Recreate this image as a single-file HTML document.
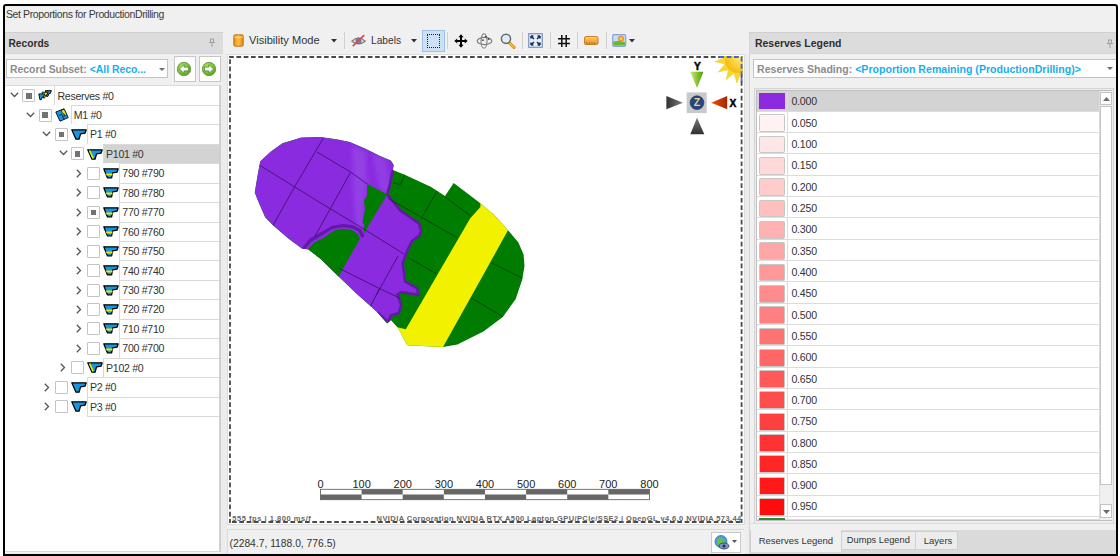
<!DOCTYPE html><html><head><meta charset="utf-8"><style>
*{margin:0;padding:0;box-sizing:border-box}
html,body{width:1120px;height:556px;overflow:hidden;background:#fff;font-family:"Liberation Sans", sans-serif;}
.a{position:absolute}
.t{position:absolute;white-space:nowrap;line-height:1;color:#333}
</style></head><body><div class="a" style="left:3px;top:4px;width:1115px;height:552px;border:2px solid #000;border-radius:3px 3px 0 0;background:#f0f0f0"></div>
<div class="t" style="left:6px;top:9px;font-size:10.5px;letter-spacing:-0.39px;color:#3a3a3a">Set Proportions for ProductionDrilling</div>
<div class="a" style="left:5px;top:31.5px;width:218px;height:22.3px;background:#dcdcdc;border-top:1px solid #d0d0d0;border-bottom:1px solid #d6d6d6"></div>
<div class="t" style="left:8.5px;top:38.5px;font-size:10.2px;font-weight:bold;color:#2e2e2e">Records</div>
<svg class="a" style="left:208px;top:38px" width="8" height="10" viewBox="0 0 8 10"><path d="M2 1h4M2.5 1v3.5M5.5 1v3.5M1 4.5h6M4 4.5v4.5" stroke="#9a9a9a" stroke-width="0.9" fill="none"/></svg>
<div class="a" style="left:6px;top:59px;width:162px;height:19px;background:#fff;border:1px solid #c4c4c4"></div>
<div class="t" style="left:10px;top:64.8px;font-size:10.4px;font-weight:bold;color:#8c8c8c">Record Subset: <span style="color:#17aef0">&lt;All Reco...</span></div>
<svg class="a" style="left:158.5px;top:67.6px" width="6" height="4"><path d="M0 0h6l-3 3z" fill="#6b6b6b"/></svg>
<div class="a" style="left:173.5px;top:56px;width:22px;height:25.5px;background:#fff;border:1px solid #c6c6c6"></div><svg class="a" style="left:177.0px;top:61.5px" width="14" height="14" viewBox="0 0 14 14"><defs><radialGradient id="gg" cx="0.4" cy="0.35" r="0.7"><stop offset="0" stop-color="#b6e86a"/><stop offset="1" stop-color="#5aa21a"/></radialGradient></defs><circle cx="7" cy="7" r="6.7" fill="url(#gg)" stroke="#4e8a20" stroke-width="0.7"/><path d="M2.3 7 L7.2 2.6 V5.1 H11.6 V8.9 H7.2 V11.4 Z" fill="#f2f6fc" stroke="#3f7a16" stroke-width="0.7" stroke-linejoin="round"/></svg>
<div class="a" style="left:198.5px;top:56px;width:22px;height:25.5px;background:#fff;border:1px solid #c6c6c6"></div><svg class="a" style="left:202.0px;top:61.5px" width="14" height="14" viewBox="0 0 14 14"><defs><radialGradient id="gg" cx="0.4" cy="0.35" r="0.7"><stop offset="0" stop-color="#b6e86a"/><stop offset="1" stop-color="#5aa21a"/></radialGradient></defs><circle cx="7" cy="7" r="6.7" fill="url(#gg)" stroke="#4e8a20" stroke-width="0.7"/><path d="M11.7 7 L6.8 2.6 V5.1 H2.4 V8.9 H6.8 V11.4 Z" fill="#f2f6fc" stroke="#3f7a16" stroke-width="0.7" stroke-linejoin="round"/></svg>
<div class="a" style="left:5px;top:85px;width:216px;height:467px;background:#fff;border-right:2px solid #cfcfcf;border-bottom:1px solid #d8d8d8;border-top:1px solid #dcdcdc"></div>
<div class="a" style="left:221px;top:54px;width:6px;height:500px;background:#ececec"></div>
<div class="a" style="left:54.4px;top:85px;width:164.6px;height:20px;background:#fff;border-top:1px solid #dadada;border-left:1px solid #dadada;"></div>
<svg class="a" style="left:10.0px;top:92.1px" width="9" height="6" viewBox="0 0 9 6"><path d="M0.8 0.8L4.5 4.5L8.2 0.8" stroke="#555" stroke-width="1.3" fill="none"/></svg>
<div class="a" style="left:22.3px;top:89.10px;width:13px;height:13px;border:1px solid #c4c4c4;border-radius:1px;background:#fff"></div>
<div class="a" style="left:26.1px;top:93.00px;width:5.5px;height:5.5px;background:#727272"></div>
<svg class="a" style="left:38.3px;top:90.3px" width="15" height="11" viewBox="0 0 15 11"><path d="M7.4 0.6 L13.4 0.6 L12.3 3.4 L10.9 3.7 L9.9 6.4 L8.5 6.4Z" fill="#1497df" stroke="#000" stroke-width="0.9" stroke-linejoin="round"/><path d="M4.1 2.2 L10.1 2.2 L9.0 5.0 L7.6 5.3 L6.6 8.0 L5.2 8.0Z" fill="#f2e600" stroke="#000" stroke-width="0.9" stroke-linejoin="round"/><path d="M0.8 3.9 L6.8 3.9 L5.7 6.7 L4.3 7.0 L3.3 9.7 L1.9 9.7Z" fill="#1497df" stroke="#000" stroke-width="0.9" stroke-linejoin="round"/></svg>
<div class="t" style="left:57.5px;top:90.60px;font-size:10.6px;letter-spacing:-0.3px;color:#333">Reserves #0</div>
<div class="a" style="left:70.6px;top:105px;width:148.4px;height:19px;background:#fff;border-top:1px solid #dadada;border-left:1px solid #dadada;"></div>
<svg class="a" style="left:26.2px;top:111.5px" width="9" height="6" viewBox="0 0 9 6"><path d="M0.8 0.8L4.5 4.5L8.2 0.8" stroke="#555" stroke-width="1.3" fill="none"/></svg>
<div class="a" style="left:38.5px;top:108.54px;width:13px;height:13px;border:1px solid #c4c4c4;border-radius:1px;background:#fff"></div>
<div class="a" style="left:42.3px;top:112.44px;width:5.5px;height:5.5px;background:#727272"></div>
<svg class="a" style="left:54.5px;top:107.84px" width="14" height="14" viewBox="0 0 14 14"><path d="M0.8 4L9 0.8L13.2 9.6L5 13.2Z" fill="#1497df" stroke="#0a1a2a" stroke-width="1" stroke-linejoin="round"/><path d="M4 7.5L6.5 6.2L9 11.2" fill="none" stroke="#0a1a2a" stroke-width="0.9"/><path d="M6 2.6L9.2 1.2L12 7L8.8 8.4L9.6 6.2L7.6 5.4Z" fill="#f2e600" stroke="#0a1a2a" stroke-width="0.8" stroke-linejoin="round"/></svg>
<div class="t" style="left:73.7px;top:110.04px;font-size:10.6px;letter-spacing:-0.3px;color:#333">M1 #0</div>
<div class="a" style="left:86.8px;top:124px;width:132.2px;height:20px;background:#fff;border-top:1px solid #dadada;border-left:1px solid #dadada;"></div>
<svg class="a" style="left:42.4px;top:131.0px" width="9" height="6" viewBox="0 0 9 6"><path d="M0.8 0.8L4.5 4.5L8.2 0.8" stroke="#555" stroke-width="1.3" fill="none"/></svg>
<div class="a" style="left:54.7px;top:127.98px;width:13px;height:13px;border:1px solid #c4c4c4;border-radius:1px;background:#fff"></div>
<div class="a" style="left:58.5px;top:131.88px;width:5.5px;height:5.5px;background:#727272"></div>
<svg class="a" style="left:70.9px;top:129.07999999999998px" width="16" height="11" viewBox="0 0 16 11"><path d="M0.8 0.8H15.2L14 4.2L9.6 4.8L8 10.2H5Z" fill="#1497df" stroke="#000" stroke-width="1.3" stroke-linejoin="round"/></svg>
<div class="t" style="left:89.9px;top:129.48px;font-size:10.6px;letter-spacing:-0.3px;color:#333">P1 #0</div>
<div class="a" style="left:103.0px;top:144px;width:116.0px;height:19px;background:#d3d3d3;border-top:1px solid #dadada;border-left:1px solid #dadada;"></div>
<svg class="a" style="left:58.6px;top:150.4px" width="9" height="6" viewBox="0 0 9 6"><path d="M0.8 0.8L4.5 4.5L8.2 0.8" stroke="#555" stroke-width="1.3" fill="none"/></svg>
<div class="a" style="left:70.9px;top:147.42px;width:13px;height:13px;border:1px solid #c4c4c4;border-radius:1px;background:#fff"></div>
<div class="a" style="left:74.7px;top:151.32px;width:5.5px;height:5.5px;background:#727272"></div>
<svg class="a" style="left:87.1px;top:148.51999999999998px" width="16" height="11" viewBox="0 0 16 11"><path d="M0.8 0.8H15.2L14 4.2L9.6 4.8L8 10.2H5Z" fill="#1497df" stroke="#000" stroke-width="1.3" stroke-linejoin="round"/><path d="M2.5 1.5L6.2 9.4" stroke="#f2e600" stroke-width="1.6"/></svg>
<div class="t" style="left:106.1px;top:148.92px;font-size:10.6px;letter-spacing:-0.3px;color:#333">P101 #0</div>
<div class="a" style="left:119.2px;top:163px;width:99.8px;height:20px;background:#fff;border-top:1px solid #dadada;border-left:1px solid #dadada;"></div>
<svg class="a" style="left:76.3px;top:168.9px" width="6" height="9" viewBox="0 0 6 9"><path d="M0.8 0.8L4.5 4.5L0.8 8.2" stroke="#555" stroke-width="1.3" fill="none"/></svg>
<div class="a" style="left:87.1px;top:166.86px;width:13px;height:13px;border:1px solid #c4c4c4;border-radius:1px;background:#fff"></div>
<svg class="a" style="left:103.3px;top:167.95999999999998px" width="16" height="11" viewBox="0 0 16 11"><path d="M0.8 0.8H15.2L14 4.2L9.6 4.8L8.6 9.8H4.4Z" fill="#1497df" stroke="#000" stroke-width="1.3" stroke-linejoin="round"/><path d="M2.6 5.6H9.6L9.2 7.6H3.6Z" fill="#f2e600"/></svg>
<div class="t" style="left:122.3px;top:168.36px;font-size:10.6px;letter-spacing:-0.3px;color:#333">790 #790</div>
<div class="a" style="left:119.2px;top:183px;width:99.8px;height:19px;background:#fff;border-top:1px solid #dadada;border-left:1px solid #dadada;"></div>
<svg class="a" style="left:76.3px;top:188.3px" width="6" height="9" viewBox="0 0 6 9"><path d="M0.8 0.8L4.5 4.5L0.8 8.2" stroke="#555" stroke-width="1.3" fill="none"/></svg>
<div class="a" style="left:87.1px;top:186.30px;width:13px;height:13px;border:1px solid #c4c4c4;border-radius:1px;background:#fff"></div>
<svg class="a" style="left:103.3px;top:187.39999999999998px" width="16" height="11" viewBox="0 0 16 11"><path d="M0.8 0.8H15.2L14 4.2L9.6 4.8L8.6 9.8H4.4Z" fill="#1497df" stroke="#000" stroke-width="1.3" stroke-linejoin="round"/><path d="M2.6 5.6H9.6L9.2 7.6H3.6Z" fill="#f2e600"/></svg>
<div class="t" style="left:122.3px;top:187.80px;font-size:10.6px;letter-spacing:-0.3px;color:#333">780 #780</div>
<div class="a" style="left:119.2px;top:202px;width:99.8px;height:20px;background:#fff;border-top:1px solid #dadada;border-left:1px solid #dadada;"></div>
<svg class="a" style="left:76.3px;top:207.7px" width="6" height="9" viewBox="0 0 6 9"><path d="M0.8 0.8L4.5 4.5L0.8 8.2" stroke="#555" stroke-width="1.3" fill="none"/></svg>
<div class="a" style="left:87.1px;top:205.74px;width:13px;height:13px;border:1px solid #c4c4c4;border-radius:1px;background:#fff"></div>
<div class="a" style="left:90.9px;top:209.64px;width:5.5px;height:5.5px;background:#727272"></div>
<svg class="a" style="left:103.3px;top:206.84px" width="16" height="11" viewBox="0 0 16 11"><path d="M0.8 0.8H15.2L14 4.2L9.6 4.8L8.6 9.8H4.4Z" fill="#1497df" stroke="#000" stroke-width="1.3" stroke-linejoin="round"/><path d="M2.6 5.6H9.6L9.2 7.6H3.6Z" fill="#f2e600"/></svg>
<div class="t" style="left:122.3px;top:207.24px;font-size:10.6px;letter-spacing:-0.3px;color:#333">770 #770</div>
<div class="a" style="left:119.2px;top:222px;width:99.8px;height:19px;background:#fff;border-top:1px solid #dadada;border-left:1px solid #dadada;"></div>
<svg class="a" style="left:76.3px;top:227.2px" width="6" height="9" viewBox="0 0 6 9"><path d="M0.8 0.8L4.5 4.5L0.8 8.2" stroke="#555" stroke-width="1.3" fill="none"/></svg>
<div class="a" style="left:87.1px;top:225.18px;width:13px;height:13px;border:1px solid #c4c4c4;border-radius:1px;background:#fff"></div>
<svg class="a" style="left:103.3px;top:226.28px" width="16" height="11" viewBox="0 0 16 11"><path d="M0.8 0.8H15.2L14 4.2L9.6 4.8L8.6 9.8H4.4Z" fill="#1497df" stroke="#000" stroke-width="1.3" stroke-linejoin="round"/><path d="M2.6 5.6H9.6L9.2 7.6H3.6Z" fill="#f2e600"/></svg>
<div class="t" style="left:122.3px;top:226.68px;font-size:10.6px;letter-spacing:-0.3px;color:#333">760 #760</div>
<div class="a" style="left:119.2px;top:241px;width:99.8px;height:19px;background:#fff;border-top:1px solid #dadada;border-left:1px solid #dadada;"></div>
<svg class="a" style="left:76.3px;top:246.6px" width="6" height="9" viewBox="0 0 6 9"><path d="M0.8 0.8L4.5 4.5L0.8 8.2" stroke="#555" stroke-width="1.3" fill="none"/></svg>
<div class="a" style="left:87.1px;top:244.62px;width:13px;height:13px;border:1px solid #c4c4c4;border-radius:1px;background:#fff"></div>
<svg class="a" style="left:103.3px;top:245.72px" width="16" height="11" viewBox="0 0 16 11"><path d="M0.8 0.8H15.2L14 4.2L9.6 4.8L8.6 9.8H4.4Z" fill="#1497df" stroke="#000" stroke-width="1.3" stroke-linejoin="round"/><path d="M2.6 5.6H9.6L9.2 7.6H3.6Z" fill="#f2e600"/></svg>
<div class="t" style="left:122.3px;top:246.12px;font-size:10.6px;letter-spacing:-0.3px;color:#333">750 #750</div>
<div class="a" style="left:119.2px;top:260px;width:99.8px;height:20px;background:#fff;border-top:1px solid #dadada;border-left:1px solid #dadada;"></div>
<svg class="a" style="left:76.3px;top:266.1px" width="6" height="9" viewBox="0 0 6 9"><path d="M0.8 0.8L4.5 4.5L0.8 8.2" stroke="#555" stroke-width="1.3" fill="none"/></svg>
<div class="a" style="left:87.1px;top:264.06px;width:13px;height:13px;border:1px solid #c4c4c4;border-radius:1px;background:#fff"></div>
<svg class="a" style="left:103.3px;top:265.16px" width="16" height="11" viewBox="0 0 16 11"><path d="M0.8 0.8H15.2L14 4.2L9.6 4.8L8.6 9.8H4.4Z" fill="#1497df" stroke="#000" stroke-width="1.3" stroke-linejoin="round"/><path d="M2.6 5.6H9.6L9.2 7.6H3.6Z" fill="#f2e600"/></svg>
<div class="t" style="left:122.3px;top:265.56px;font-size:10.6px;letter-spacing:-0.3px;color:#333">740 #740</div>
<div class="a" style="left:119.2px;top:280px;width:99.8px;height:19px;background:#fff;border-top:1px solid #dadada;border-left:1px solid #dadada;"></div>
<svg class="a" style="left:76.3px;top:285.5px" width="6" height="9" viewBox="0 0 6 9"><path d="M0.8 0.8L4.5 4.5L0.8 8.2" stroke="#555" stroke-width="1.3" fill="none"/></svg>
<div class="a" style="left:87.1px;top:283.50px;width:13px;height:13px;border:1px solid #c4c4c4;border-radius:1px;background:#fff"></div>
<svg class="a" style="left:103.3px;top:284.59999999999997px" width="16" height="11" viewBox="0 0 16 11"><path d="M0.8 0.8H15.2L14 4.2L9.6 4.8L8.6 9.8H4.4Z" fill="#1497df" stroke="#000" stroke-width="1.3" stroke-linejoin="round"/><path d="M2.6 5.6H9.6L9.2 7.6H3.6Z" fill="#f2e600"/></svg>
<div class="t" style="left:122.3px;top:285.00px;font-size:10.6px;letter-spacing:-0.3px;color:#333">730 #730</div>
<div class="a" style="left:119.2px;top:299px;width:99.8px;height:20px;background:#fff;border-top:1px solid #dadada;border-left:1px solid #dadada;"></div>
<svg class="a" style="left:76.3px;top:304.9px" width="6" height="9" viewBox="0 0 6 9"><path d="M0.8 0.8L4.5 4.5L0.8 8.2" stroke="#555" stroke-width="1.3" fill="none"/></svg>
<div class="a" style="left:87.1px;top:302.94px;width:13px;height:13px;border:1px solid #c4c4c4;border-radius:1px;background:#fff"></div>
<svg class="a" style="left:103.3px;top:304.04px" width="16" height="11" viewBox="0 0 16 11"><path d="M0.8 0.8H15.2L14 4.2L9.6 4.8L8.6 9.8H4.4Z" fill="#1497df" stroke="#000" stroke-width="1.3" stroke-linejoin="round"/><path d="M2.6 5.6H9.6L9.2 7.6H3.6Z" fill="#f2e600"/></svg>
<div class="t" style="left:122.3px;top:304.44px;font-size:10.6px;letter-spacing:-0.3px;color:#333">720 #720</div>
<div class="a" style="left:119.2px;top:319px;width:99.8px;height:19px;background:#fff;border-top:1px solid #dadada;border-left:1px solid #dadada;"></div>
<svg class="a" style="left:76.3px;top:324.4px" width="6" height="9" viewBox="0 0 6 9"><path d="M0.8 0.8L4.5 4.5L0.8 8.2" stroke="#555" stroke-width="1.3" fill="none"/></svg>
<div class="a" style="left:87.1px;top:322.38px;width:13px;height:13px;border:1px solid #c4c4c4;border-radius:1px;background:#fff"></div>
<svg class="a" style="left:103.3px;top:323.48px" width="16" height="11" viewBox="0 0 16 11"><path d="M0.8 0.8H15.2L14 4.2L9.6 4.8L8.6 9.8H4.4Z" fill="#1497df" stroke="#000" stroke-width="1.3" stroke-linejoin="round"/><path d="M2.6 5.6H9.6L9.2 7.6H3.6Z" fill="#f2e600"/></svg>
<div class="t" style="left:122.3px;top:323.88px;font-size:10.6px;letter-spacing:-0.3px;color:#333">710 #710</div>
<div class="a" style="left:119.2px;top:338px;width:99.8px;height:20px;background:#fff;border-top:1px solid #dadada;border-left:1px solid #dadada;"></div>
<svg class="a" style="left:76.3px;top:343.8px" width="6" height="9" viewBox="0 0 6 9"><path d="M0.8 0.8L4.5 4.5L0.8 8.2" stroke="#555" stroke-width="1.3" fill="none"/></svg>
<div class="a" style="left:87.1px;top:341.82px;width:13px;height:13px;border:1px solid #c4c4c4;border-radius:1px;background:#fff"></div>
<svg class="a" style="left:103.3px;top:342.92px" width="16" height="11" viewBox="0 0 16 11"><path d="M0.8 0.8H15.2L14 4.2L9.6 4.8L8.6 9.8H4.4Z" fill="#1497df" stroke="#000" stroke-width="1.3" stroke-linejoin="round"/><path d="M2.6 5.6H9.6L9.2 7.6H3.6Z" fill="#f2e600"/></svg>
<div class="t" style="left:122.3px;top:343.32px;font-size:10.6px;letter-spacing:-0.3px;color:#333">700 #700</div>
<div class="a" style="left:103.0px;top:358px;width:116.0px;height:19px;background:#fff;border-top:1px solid #dadada;border-left:1px solid #dadada;"></div>
<svg class="a" style="left:60.1px;top:363.3px" width="6" height="9" viewBox="0 0 6 9"><path d="M0.8 0.8L4.5 4.5L0.8 8.2" stroke="#555" stroke-width="1.3" fill="none"/></svg>
<div class="a" style="left:70.9px;top:361.26px;width:13px;height:13px;border:1px solid #c4c4c4;border-radius:1px;background:#fff"></div>
<svg class="a" style="left:87.1px;top:362.36px" width="16" height="11" viewBox="0 0 16 11"><path d="M0.8 0.8H15.2L14 4.2L9.6 4.8L8 10.2H5Z" fill="#1497df" stroke="#000" stroke-width="1.3" stroke-linejoin="round"/><path d="M2.5 1.5L6.2 9.4" stroke="#f2e600" stroke-width="1.6"/></svg>
<div class="t" style="left:106.1px;top:362.76px;font-size:10.6px;letter-spacing:-0.3px;color:#333">P102 #0</div>
<div class="a" style="left:86.8px;top:377px;width:132.2px;height:20px;background:#fff;border-top:1px solid #dadada;border-left:1px solid #dadada;"></div>
<svg class="a" style="left:43.9px;top:382.7px" width="6" height="9" viewBox="0 0 6 9"><path d="M0.8 0.8L4.5 4.5L0.8 8.2" stroke="#555" stroke-width="1.3" fill="none"/></svg>
<div class="a" style="left:54.7px;top:380.70px;width:13px;height:13px;border:1px solid #c4c4c4;border-radius:1px;background:#fff"></div>
<svg class="a" style="left:70.9px;top:381.8px" width="16" height="11" viewBox="0 0 16 11"><path d="M0.8 0.8H15.2L14 4.2L9.6 4.8L8 10.2H5Z" fill="#1497df" stroke="#000" stroke-width="1.3" stroke-linejoin="round"/></svg>
<div class="t" style="left:89.9px;top:382.20px;font-size:10.6px;letter-spacing:-0.3px;color:#333">P2 #0</div>
<div class="a" style="left:86.8px;top:397px;width:132.2px;height:20px;background:#fff;border-top:1px solid #dadada;border-left:1px solid #dadada;border-bottom:1px solid #dadada;"></div>
<svg class="a" style="left:43.9px;top:402.1px" width="6" height="9" viewBox="0 0 6 9"><path d="M0.8 0.8L4.5 4.5L0.8 8.2" stroke="#555" stroke-width="1.3" fill="none"/></svg>
<div class="a" style="left:54.7px;top:400.14px;width:13px;height:13px;border:1px solid #c4c4c4;border-radius:1px;background:#fff"></div>
<svg class="a" style="left:70.9px;top:401.24px" width="16" height="11" viewBox="0 0 16 11"><path d="M0.8 0.8H15.2L14 4.2L9.6 4.8L8 10.2H5Z" fill="#1497df" stroke="#000" stroke-width="1.3" stroke-linejoin="round"/></svg>
<div class="t" style="left:89.9px;top:401.64px;font-size:10.6px;letter-spacing:-0.3px;color:#333">P3 #0</div>
<svg class="a" style="left:233px;top:34px" width="11" height="13" viewBox="0 0 11 13"><defs><linearGradient id="og" x1="0" x2="1"><stop offset="0" stop-color="#e8901a"/><stop offset="0.5" stop-color="#ffc044"/><stop offset="1" stop-color="#e08a10"/></linearGradient></defs><rect x="0.8" y="0.8" width="9.4" height="11.4" rx="1.3" fill="url(#og)" stroke="#c06a10" stroke-width="0.9"/><path d="M1.2 3.2H9.8" stroke="#ffe2a0" stroke-width="0.8"/></svg>
<div class="t" style="left:249px;top:35px;font-size:11.1px;color:#333">Visibility Mode</div>
<svg class="a" style="left:331px;top:39px" width="6" height="4"><path d="M0 0h6l-3 3.5z" fill="#333"/></svg>
<div class="a" style="left:343.5px;top:32px;width:1px;height:17px;background:#d0d0d0"></div>
<svg class="a" style="left:351px;top:34px" width="15" height="13" viewBox="0 0 15 13"><path d="M0.8 7.2Q7.5 0.6 14.2 7.2Q7.5 12.6 0.8 7.2Z" fill="#d6dcea" stroke="#8c7a6a" stroke-width="1.2"/><circle cx="7.5" cy="7" r="2.6" fill="#7888b8" stroke="#4a5a8a" stroke-width="0.6"/><path d="M1.8 12.2L13.2 1.2" stroke="#e0463a" stroke-width="1.6"/></svg>
<div class="t" style="left:371px;top:36.3px;font-size:10.2px;color:#333">Labels</div>
<svg class="a" style="left:411px;top:39px" width="6" height="4"><path d="M0 0h6l-3 3.5z" fill="#333"/></svg>
<div class="a" style="left:421.5px;top:30px;width:23px;height:21.5px;background:#cde0f7;border:1px solid #9cc0e6"></div>
<div class="a" style="left:427px;top:34px;width:13px;height:13.5px;border:1.3px dotted #222"></div>
<div class="a" style="left:447px;top:32px;width:1px;height:17px;background:#d0d0d0"></div>
<svg class="a" style="left:454px;top:33.5px" width="14" height="14" viewBox="0 0 14 14"><path d="M7 0.3L9.6 3.2H8V6H10.8V4.4L13.7 7L10.8 9.6V8H8V10.8H9.6L7 13.7L4.4 10.8H6V8H3.2V9.6L0.3 7L3.2 4.4V6H6V3.2H4.4Z" fill="#000"/></svg>
<svg class="a" style="left:476px;top:33px" width="17" height="16" viewBox="0 0 17 16"><ellipse cx="8.5" cy="8" rx="7.3" ry="3.6" fill="none" stroke="#7b7b7b" stroke-width="1.1"/><ellipse cx="8" cy="8" rx="3" ry="7.2" fill="none" stroke="#7b7b7b" stroke-width="1.1"/><circle cx="9.8" cy="3.6" r="0.9" fill="#444"/><circle cx="12.6" cy="6" r="0.9" fill="#444"/><circle cx="7" cy="7.2" r="0.9" fill="#444"/></svg>
<svg class="a" style="left:500px;top:33px" width="16" height="16" viewBox="0 0 16 16"><path d="M9 9.5L14 14.4" stroke="#d08a10" stroke-width="3" stroke-linecap="round"/><path d="M9.5 10L13.8 14.2" stroke="#ffc23a" stroke-width="1.4" stroke-linecap="round"/><circle cx="6" cy="5.8" r="4.6" fill="#dcecfa" stroke="#6a6a6a" stroke-width="1.5"/></svg>
<div class="a" style="left:521.5px;top:32px;width:1px;height:17px;background:#d0d0d0"></div>
<svg class="a" style="left:528px;top:33px" width="15" height="15" viewBox="0 0 15 15"><rect x="0.7" y="0.7" width="13.6" height="13.6" fill="#e4eefa" stroke="#7d93bf" stroke-width="1.2"/><path d="M3 3L6 6M3 3H5.4M3 3V5.4M12 3L9 6M12 3H9.6M12 3V5.4M3 12L6 9M3 12H5.4M3 12V9.6M12 12L9 9M12 12H9.6M12 12V9.6" stroke="#1b2f55" stroke-width="1.5"/></svg>
<div class="a" style="left:549.5px;top:32px;width:1px;height:17px;background:#d0d0d0"></div>
<svg class="a" style="left:558px;top:34.5px" width="12" height="12.5" viewBox="0 0 12 12.5"><path d="M3.8 0V12.5M8.2 0V12.5M0 3.8H12M0 8.5H12" stroke="#111" stroke-width="1.5"/></svg>
<div class="a" style="left:577px;top:32px;width:1px;height:17px;background:#d0d0d0"></div>
<svg class="a" style="left:584px;top:36px" width="14.5" height="9" viewBox="0 0 14.5 9"><defs><linearGradient id="rg" x1="0" y1="0" x2="0" y2="1"><stop offset="0" stop-color="#ffcf6a"/><stop offset="1" stop-color="#e8901c"/></linearGradient></defs><rect x="0.5" y="0.5" width="13.5" height="8" rx="1.5" fill="url(#rg)" stroke="#c87418" stroke-width="0.9"/><path d="M3 8V6M5.5 8V6.5M8 8V6M10.5 8V6.5" stroke="#b06010" stroke-width="0.8"/></svg>
<div class="a" style="left:605.5px;top:32px;width:1px;height:17px;background:#d0d0d0"></div>
<svg class="a" style="left:612px;top:34px" width="14.5" height="13" viewBox="0 0 14.5 13"><rect x="0.7" y="0.7" width="13" height="11.6" rx="1.2" fill="#bfe0f8" stroke="#8aa0d0" stroke-width="1.2"/><path d="M1.4 7.5Q5 6 13 8.2V11.6H1.4Z" fill="#6ab830"/><circle cx="9" cy="4.8" r="2.8" fill="#f0a040" stroke="#e07a20" stroke-width="0.6"/><circle cx="9" cy="4.8" r="1.2" fill="#f8d070"/></svg>
<svg class="a" style="left:629px;top:39px" width="6" height="4"><path d="M0 0h6l-3 3.5z" fill="#333"/></svg>
<div class="a" style="left:227px;top:54px;width:517.5px;height:470.5px;background:#fff;border:1px solid #dcdcdc"></div>
<svg class="a" style="left:0;top:0" width="1120" height="556"><g fill="none" stroke="#4a4a4a" stroke-width="1.8" stroke-dasharray="4.7 2.6"><path d="M229.1 57H742"/><path d="M230 59.2V523"/><path d="M741.6 59.2V523"/><path d="M232 522H742"/></g></svg>
<svg class="a" style="left:0;top:0" width="1120" height="556" viewBox="0 0 1120 556"><defs><clipPath id="oc"><polygon points="301.3,137.4 320.2,137.1 336.4,139.2 349.9,141.9 364.5,148.2 379.6,155.8 390.9,160.5 393.8,165.2 392.8,169.9 404.2,174.6 430.7,186.7 445.0,195.9 453.7,183.0 478.7,202.0 494.3,214.9 509.8,232.2 518.4,242.5 523.6,254.6 524.5,266.0 522.2,279.7 515.7,299.1 502.8,317.0 483.4,331.5 457.4,344.5 442.9,346.9 407.2,345.3 398.3,328.3 391.0,320.2 387.0,323.4 377.3,312.2 357.9,295.0 338.5,276.6 321.2,259.4 308.3,249.6 301.8,248.6 288.9,238.9 273.7,225.9 265.1,217.3 257.6,200.0 254.7,192.5 257.4,176.3 260.1,161.4 270.2,152.0 282.4,143.2"/></clipPath><filter id="bl" x="-50%" y="-50%" width="200%" height="200%"><feGaussianBlur stdDeviation="2"/></filter></defs><polygon points="301.3,137.4 320.2,137.1 336.4,139.2 349.9,141.9 364.5,148.2 379.6,155.8 390.9,160.5 393.8,165.2 392.8,169.9 404.2,174.6 430.7,186.7 445.0,195.9 453.7,183.0 478.7,202.0 494.3,214.9 509.8,232.2 518.4,242.5 523.6,254.6 524.5,266.0 522.2,279.7 515.7,299.1 502.8,317.0 483.4,331.5 457.4,344.5 442.9,346.9 407.2,345.3 398.3,328.3 391.0,320.2 387.0,323.4 377.3,312.2 357.9,295.0 338.5,276.6 321.2,259.4 308.3,249.6 301.8,248.6 288.9,238.9 273.7,225.9 265.1,217.3 257.6,200.0 254.7,192.5 257.4,176.3 260.1,161.4 270.2,152.0 282.4,143.2" fill="#007c00"/><g clip-path="url(#oc)"><polygon points="301.3,137.4 320.2,137.1 336.4,139.2 349.9,141.9 364.5,148.2 379.6,155.8 390.9,160.5 393.8,165.2 392.8,169.9 390.0,184.1 387.2,194.4 396.6,205.8 400.4,210.5 419.2,223.7 421.1,231.2 419.6,235.4 412.1,240.8 407.8,249.4 402.6,263.3 405.2,281.6 417.0,288.1 418.3,294.7 401.3,292.0 397.4,294.7 401.3,305.1 398.7,313.0 390.9,315.5 388.3,322.1 377.3,312.2 357.9,295.0 338.5,276.6 321.2,259.4 308.3,249.6 301.8,248.6 288.9,238.9 273.7,225.9 265.1,217.3 257.6,200.0 254.7,192.5 257.4,176.3 260.1,161.4 270.2,152.0 282.4,143.2" fill="#8a2be0"/><polygon points="352,146 366,152 367,184 364,205 363,228 356,230 353,190" fill="#a468ee" opacity="0.35" filter="url(#bl)"/><polygon points="372,153 386,159 390,184 387,194 380,190 376,172" fill="#a468ee" opacity="0.3" filter="url(#bl)"/><polyline points="392.8,169.9 390.0,184.1 387.2,194.4 396.6,205.8 400.4,210.5 419.2,223.7 421.1,231.2 419.6,235.4 412.1,240.8 407.8,249.4 402.6,263.3 405.2,281.6 417.0,288.1 418.3,294.7 401.3,292.0 397.4,294.7 401.3,305.1 398.7,313.0 390.9,315.5 388.3,322.1 377.3,312.2" fill="none" stroke="#6418a8" stroke-width="2.6"/><polyline points="303.0,249.5 310.0,240.5 322.0,233.5 332.0,227.5 343.0,225.5 353.0,226.8 360.0,230.5 363.0,237.0" fill="none" stroke="#6418a8" stroke-width="3.2" stroke-linejoin="round"/><polygon points="307.6,249.6 313.9,242.7 324.0,237.6 329.0,233.9 335.3,230.1 342.9,228.8 351.7,230.1 358.0,233.9 359.9,238.9 338.5,276.7 321.2,259.4 308.3,249.6" fill="#007c00"/><polygon points="367.4,184.1 387.2,194.4 363.6,234.0 364.5,225.0 362.5,222.0 365.0,210.0 364.0,200.0 367.0,196.0" fill="#007c00"/><polygon points="476.0,190.0 480.4,203.0 480.4,207.1 470.1,218.4 405.8,329.3 396.0,327.0 390.0,360.0 440.0,360.0 443.0,347.0 486.0,270.0 508.1,230.0 525.0,215.0 490.0,185.0" fill="#f2f200"/><line x1="404.8" y1="174.8" x2="400.4" y2="184.5" stroke="#0a3a0a" stroke-width="0.8"/><line x1="400.4" y1="184.5" x2="393" y2="182.8" stroke="#0a3a0a" stroke-width="0.8"/><line x1="437" y1="191" x2="421" y2="219" stroke="#0a3a0a" stroke-width="0.8"/><line x1="445" y1="197" x2="470" y2="215.5" stroke="#0a3a0a" stroke-width="0.8"/><line x1="388.6" y1="198.6" x2="457" y2="237.6" stroke="#0a3a0a" stroke-width="0.8"/><line x1="490.9" y1="262.4" x2="524" y2="279" stroke="#0a3a0a" stroke-width="0.8"/><line x1="408.9" y1="258" x2="436" y2="273.5" stroke="#0a3a0a" stroke-width="0.8"/><line x1="471.4" y1="298" x2="505" y2="318" stroke="#0a3a0a" stroke-width="0.8"/><line x1="323.5" y1="137.8" x2="294.5" y2="187.1" stroke="#3a1060" stroke-width="0.8"/><line x1="294.5" y1="187.1" x2="272.7" y2="225.9" stroke="#3a1060" stroke-width="0.8"/><line x1="260.1" y1="165.5" x2="315.8" y2="200" stroke="#3a1060" stroke-width="0.8"/><line x1="315.8" y1="200" x2="362.2" y2="228" stroke="#3a1060" stroke-width="0.8"/><line x1="316.8" y1="152" x2="349.9" y2="171.6" stroke="#3a1060" stroke-width="0.8"/><line x1="349.9" y1="171.6" x2="367.4" y2="184.1" stroke="#3a1060" stroke-width="0.8"/><line x1="350.4" y1="172.5" x2="314.8" y2="236.7" stroke="#3a1060" stroke-width="0.8"/><line x1="338.5" y1="268" x2="379.5" y2="288.5" stroke="#3a1060" stroke-width="0.8"/><line x1="379.5" y1="288.5" x2="400" y2="298.2" stroke="#3a1060" stroke-width="0.8"/><line x1="379.5" y1="288.5" x2="369.8" y2="307.9" stroke="#3a1060" stroke-width="0.8"/><line x1="362.2" y1="228" x2="404" y2="254" stroke="#3a1060" stroke-width="0.8"/><line x1="398" y1="255.9" x2="376.5" y2="294.7" stroke="#3a1060" stroke-width="0.8"/></g></svg>
<svg class="a" style="left:0;top:0" width="1120" height="556" viewBox="0 0 1120 556"><defs><clipPath id="vc"><rect x="230" y="56" width="512.5" height="466"/></clipPath><radialGradient id="sung" cx="0.6" cy="0.4" r="0.6"><stop offset="0" stop-color="#ffec7a"/><stop offset="1" stop-color="#f4be10"/></radialGradient><linearGradient id="gy" x1="0" x2="1"><stop offset="0" stop-color="#c8f060"/><stop offset="1" stop-color="#4a9a10"/></linearGradient><linearGradient id="rx" x1="0" x2="1"><stop offset="0" stop-color="#ff4a00"/><stop offset="1" stop-color="#a02800"/></linearGradient><linearGradient id="gl" x1="0" x2="0" y1="0" y2="1"><stop offset="0" stop-color="#7a7a7a"/><stop offset="1" stop-color="#303030"/></linearGradient><linearGradient id="gb" x1="0" x2="1"><stop offset="0" stop-color="#303030"/><stop offset="1" stop-color="#808080"/></linearGradient></defs><g clip-path="url(#vc)"><path d="M715.1,61.6 L724.7,57.7 L716.9,50.8 L727.3,51.8 L723.6,42.0 L732.3,47.7 L733.6,37.4 L738.7,46.5 L744.6,38.0 L744.9,48.4 L754.1,43.6 L749.5,52.9 L759.9,53.0 L751.5,59.1 L760.7,63.9 L750.4,65.4 L756.2,74.0 L746.4,70.5 L747.6,80.9 L740.6,73.3 L736.8,83.0 L734.1,72.9 L726.3,79.8 L728.5,69.6 L718.4,72.1 L725.1,64.1Z" fill="#f9d82a" stroke="#f0c020" stroke-width="0.5"/><circle cx="738" cy="60" r="13" fill="url(#sung)"/></g></g><path d="M719.4 57H741.6V82" stroke="#4262d8" stroke-width="1.8" stroke-dasharray="4.7 2.6" fill="none"/><text x="697.5" y="69.8" font-family="Liberation Sans" font-weight="bold" font-size="10.2" text-anchor="middle" fill="#000" stroke="#000" stroke-width="0.5">Y</text><path d="M690.3 71.8H703.5L697 88Z" fill="url(#gy)"/><rect x="686.7" y="92.4" width="20" height="20.7" fill="#c9c9c9"/><circle cx="697" cy="102.7" r="6.9" fill="#26457a" stroke="#1a3058" stroke-width="0.6"/><text x="697" y="106.3" font-family="Liberation Sans" font-weight="bold" font-size="10.5" text-anchor="middle" fill="#e8d0a0">Z</text><path d="M666.4 96V109.2L683 102.7Z" fill="url(#gb)"/><path d="M727.2 96V109.2L711.2 102.7Z" fill="url(#rx)"/><text x="733" y="107" font-family="Liberation Sans" font-weight="bold" font-size="10.2" text-anchor="middle" fill="#000" stroke="#000" stroke-width="0.5">X</text><path d="M697 117.7L704.3 134.2H690.3Z" fill="url(#gl)"/></svg>
<svg class="a" style="left:0;top:0" width="1120" height="556" viewBox="0 0 1120 556"><rect x="320.5" y="489.3" width="329.0" height="10.4" fill="#fff" stroke="#555" stroke-width="0.8"/><rect x="320.5" y="494.5" width="41.1" height="5.2" fill="#666"/><rect x="361.6" y="489.3" width="41.1" height="5.2" fill="#666"/><rect x="402.7" y="494.5" width="41.1" height="5.2" fill="#666"/><rect x="443.9" y="489.3" width="41.1" height="5.2" fill="#666"/><rect x="485.0" y="494.5" width="41.1" height="5.2" fill="#666"/><rect x="526.1" y="489.3" width="41.1" height="5.2" fill="#666"/><rect x="567.2" y="494.5" width="41.1" height="5.2" fill="#666"/><rect x="608.3" y="489.3" width="41.1" height="5.2" fill="#666"/><text x="320.5" y="487.7" font-family="Liberation Sans" font-size="11" text-anchor="middle" fill="#222">0</text><text x="361.6" y="487.7" font-family="Liberation Sans" font-size="11" text-anchor="middle" fill="#222">100</text><text x="402.7" y="487.7" font-family="Liberation Sans" font-size="11" text-anchor="middle" fill="#222">200</text><text x="443.9" y="487.7" font-family="Liberation Sans" font-size="11" text-anchor="middle" fill="#222">300</text><text x="485.0" y="487.7" font-family="Liberation Sans" font-size="11" text-anchor="middle" fill="#222">400</text><text x="526.1" y="487.7" font-family="Liberation Sans" font-size="11" text-anchor="middle" fill="#222">500</text><text x="567.2" y="487.7" font-family="Liberation Sans" font-size="11" text-anchor="middle" fill="#222">600</text><text x="608.3" y="487.7" font-family="Liberation Sans" font-size="11" text-anchor="middle" fill="#222">700</text><text x="649.5" y="487.7" font-family="Liberation Sans" font-size="11" text-anchor="middle" fill="#222">800</text></svg>
<div class="t" style="left:232.3px;top:514.5px;font-size:7.5px;font-weight:bold;color:#666;letter-spacing:0.53px">555 fps | 1.800 ms/f</div>
<div class="t" style="left:376.6px;top:514.5px;font-size:7.5px;font-weight:bold;color:#666;letter-spacing:0.406px">NVIDIA Corporation NVIDIA RTX A500 Laptop GPU/PCIe/SSE2 | OpenGL v4.6.0 NVIDIA 573.44</div>
<div class="a" style="left:227px;top:529px;width:517px;height:25px;background:#f0f0f0;border-top:1px solid #dadada;border-left:1px solid #dadada"></div>
<div class="t" style="left:229.5px;top:538.5px;font-size:10.3px;color:#333">(2284.7, 1188.0, 776.5)</div>
<div class="a" style="left:711px;top:532px;width:30px;height:20.5px;background:#fff;border:1px solid #c8c8c8"></div>
<svg class="a" style="left:714px;top:534px" width="24" height="17" viewBox="0 0 24 17"><circle cx="7" cy="7.5" r="6" fill="#4aa0e0" stroke="#2a70b0" stroke-width="0.8"/><path d="M3 5Q6 3 8 5T11 9L9 12Q6 10 4 11Z" fill="#6cc040"/><ellipse cx="10" cy="12" rx="5" ry="3" fill="#8090c8" stroke="#2a3a70" stroke-width="0.8"/><circle cx="10" cy="12" r="1.5" fill="#1a2a60"/><path d="M18 6h5l-2.5 3z" fill="#555"/></svg>
<div class="a" style="left:744.5px;top:54px;width:4px;height:500px;background:#ececec"></div>
<div class="a" style="left:748.5px;top:31.5px;width:367.5px;height:522.5px;background:#f0f0f0;border-left:1px solid #d6d6d6"></div>
<div class="a" style="left:749.5px;top:31.5px;width:366.5px;height:22.5px;background:#dcdcdc;border-top:1px solid #d0d0d0;border-bottom:1px solid #d6d6d6"></div>
<div class="t" style="left:755px;top:39px;font-size:10.45px;font-weight:bold;color:#2e2e2e">Reserves Legend</div>
<svg class="a" style="left:1106px;top:38.5px" width="8" height="10" viewBox="0 0 8 10"><path d="M2 1h4M2.5 1v3.5M5.5 1v3.5M1 4.5h6M4 4.5v4.5" stroke="#9a9a9a" stroke-width="0.9" fill="none"/></svg>
<div class="a" style="left:753px;top:59px;width:363px;height:18.8px;background:#fff;border:1px solid #c4c4c4;border-right:none"></div>
<div class="t" style="left:757px;top:64px;font-size:10.58px;font-weight:bold;color:#8c8c8c">Reserves Shading: <span style="color:#17aef0">&lt;Proportion Remaining (ProductionDrilling)&gt;</span></div>
<svg class="a" style="left:1107px;top:67px" width="6" height="4"><path d="M0 0h6l-3 3z" fill="#6b6b6b"/></svg>
<div class="a" style="left:753.5px;top:87.5px;width:360px;height:436px;background:#ececec;border:1px solid #d4d4d4"></div>
<div class="a" style="left:755.5px;top:90px;width:356.5px;height:431px;background:#fff;border:1px solid #c0c0c0;overflow:hidden"></div>
<div class="a" style="left:756.5px;top:90.50px;width:342px;height:21.32px;background:#d3d3d3;border-bottom:1px solid #dcdcdc;overflow:hidden"><div class="a" style="left:30.5px;top:0;width:1px;height:22px;background:#dcdcdc"></div></div>
<div class="a" style="left:758.8px;top:92.70px;width:26px;height:16.8px;background:#8a2be0"></div>
<div class="t" style="left:791.4px;top:96.40px;font-size:10.6px;letter-spacing:-0.2px;color:#333">0.000</div>
<div class="a" style="left:756.5px;top:111.82px;width:342px;height:21.32px;background:#fff;border-bottom:1px solid #dcdcdc;overflow:hidden"><div class="a" style="left:30.5px;top:0;width:1px;height:22px;background:#dcdcdc"></div></div>
<div class="a" style="left:758.5px;top:114.32px;width:26.5px;height:17.8px;background:rgb(255,242,242);border:1px solid #c8c8c8;border-radius:1.5px"></div>
<div class="t" style="left:791.4px;top:117.72px;font-size:10.6px;letter-spacing:-0.2px;color:#333">0.050</div>
<div class="a" style="left:756.5px;top:133.14px;width:342px;height:21.32px;background:#fff;border-bottom:1px solid #dcdcdc;overflow:hidden"><div class="a" style="left:30.5px;top:0;width:1px;height:22px;background:#dcdcdc"></div></div>
<div class="a" style="left:758.5px;top:135.64px;width:26.5px;height:17.8px;background:rgb(255,230,230);border:1px solid #c8c8c8;border-radius:1.5px"></div>
<div class="t" style="left:791.4px;top:139.04px;font-size:10.6px;letter-spacing:-0.2px;color:#333">0.100</div>
<div class="a" style="left:756.5px;top:154.46px;width:342px;height:21.32px;background:#fff;border-bottom:1px solid #dcdcdc;overflow:hidden"><div class="a" style="left:30.5px;top:0;width:1px;height:22px;background:#dcdcdc"></div></div>
<div class="a" style="left:758.5px;top:156.96px;width:26.5px;height:17.8px;background:rgb(255,217,217);border:1px solid #c8c8c8;border-radius:1.5px"></div>
<div class="t" style="left:791.4px;top:160.36px;font-size:10.6px;letter-spacing:-0.2px;color:#333">0.150</div>
<div class="a" style="left:756.5px;top:175.78px;width:342px;height:21.32px;background:#fff;border-bottom:1px solid #dcdcdc;overflow:hidden"><div class="a" style="left:30.5px;top:0;width:1px;height:22px;background:#dcdcdc"></div></div>
<div class="a" style="left:758.5px;top:178.28px;width:26.5px;height:17.8px;background:rgb(255,204,204);border:1px solid #c8c8c8;border-radius:1.5px"></div>
<div class="t" style="left:791.4px;top:181.68px;font-size:10.6px;letter-spacing:-0.2px;color:#333">0.200</div>
<div class="a" style="left:756.5px;top:197.10px;width:342px;height:21.32px;background:#fff;border-bottom:1px solid #dcdcdc;overflow:hidden"><div class="a" style="left:30.5px;top:0;width:1px;height:22px;background:#dcdcdc"></div></div>
<div class="a" style="left:758.5px;top:199.60px;width:26.5px;height:17.8px;background:rgb(255,191,191);border:1px solid #c8c8c8;border-radius:1.5px"></div>
<div class="t" style="left:791.4px;top:203.00px;font-size:10.6px;letter-spacing:-0.2px;color:#333">0.250</div>
<div class="a" style="left:756.5px;top:218.42px;width:342px;height:21.32px;background:#fff;border-bottom:1px solid #dcdcdc;overflow:hidden"><div class="a" style="left:30.5px;top:0;width:1px;height:22px;background:#dcdcdc"></div></div>
<div class="a" style="left:758.5px;top:220.92px;width:26.5px;height:17.8px;background:rgb(255,178,178);border:1px solid #c8c8c8;border-radius:1.5px"></div>
<div class="t" style="left:791.4px;top:224.32px;font-size:10.6px;letter-spacing:-0.2px;color:#333">0.300</div>
<div class="a" style="left:756.5px;top:239.74px;width:342px;height:21.32px;background:#fff;border-bottom:1px solid #dcdcdc;overflow:hidden"><div class="a" style="left:30.5px;top:0;width:1px;height:22px;background:#dcdcdc"></div></div>
<div class="a" style="left:758.5px;top:242.24px;width:26.5px;height:17.8px;background:rgb(255,166,166);border:1px solid #c8c8c8;border-radius:1.5px"></div>
<div class="t" style="left:791.4px;top:245.64px;font-size:10.6px;letter-spacing:-0.2px;color:#333">0.350</div>
<div class="a" style="left:756.5px;top:261.06px;width:342px;height:21.32px;background:#fff;border-bottom:1px solid #dcdcdc;overflow:hidden"><div class="a" style="left:30.5px;top:0;width:1px;height:22px;background:#dcdcdc"></div></div>
<div class="a" style="left:758.5px;top:263.56px;width:26.5px;height:17.8px;background:rgb(255,153,153);border:1px solid #c8c8c8;border-radius:1.5px"></div>
<div class="t" style="left:791.4px;top:266.96px;font-size:10.6px;letter-spacing:-0.2px;color:#333">0.400</div>
<div class="a" style="left:756.5px;top:282.38px;width:342px;height:21.32px;background:#fff;border-bottom:1px solid #dcdcdc;overflow:hidden"><div class="a" style="left:30.5px;top:0;width:1px;height:22px;background:#dcdcdc"></div></div>
<div class="a" style="left:758.5px;top:284.88px;width:26.5px;height:17.8px;background:rgb(255,140,140);border:1px solid #c8c8c8;border-radius:1.5px"></div>
<div class="t" style="left:791.4px;top:288.28px;font-size:10.6px;letter-spacing:-0.2px;color:#333">0.450</div>
<div class="a" style="left:756.5px;top:303.70px;width:342px;height:21.32px;background:#fff;border-bottom:1px solid #dcdcdc;overflow:hidden"><div class="a" style="left:30.5px;top:0;width:1px;height:22px;background:#dcdcdc"></div></div>
<div class="a" style="left:758.5px;top:306.20px;width:26.5px;height:17.8px;background:rgb(255,128,128);border:1px solid #c8c8c8;border-radius:1.5px"></div>
<div class="t" style="left:791.4px;top:309.60px;font-size:10.6px;letter-spacing:-0.2px;color:#333">0.500</div>
<div class="a" style="left:756.5px;top:325.02px;width:342px;height:21.32px;background:#fff;border-bottom:1px solid #dcdcdc;overflow:hidden"><div class="a" style="left:30.5px;top:0;width:1px;height:22px;background:#dcdcdc"></div></div>
<div class="a" style="left:758.5px;top:327.52px;width:26.5px;height:17.8px;background:rgb(255,115,115);border:1px solid #c8c8c8;border-radius:1.5px"></div>
<div class="t" style="left:791.4px;top:330.92px;font-size:10.6px;letter-spacing:-0.2px;color:#333">0.550</div>
<div class="a" style="left:756.5px;top:346.34px;width:342px;height:21.32px;background:#fff;border-bottom:1px solid #dcdcdc;overflow:hidden"><div class="a" style="left:30.5px;top:0;width:1px;height:22px;background:#dcdcdc"></div></div>
<div class="a" style="left:758.5px;top:348.84px;width:26.5px;height:17.8px;background:rgb(255,102,102);border:1px solid #c8c8c8;border-radius:1.5px"></div>
<div class="t" style="left:791.4px;top:352.24px;font-size:10.6px;letter-spacing:-0.2px;color:#333">0.600</div>
<div class="a" style="left:756.5px;top:367.66px;width:342px;height:21.32px;background:#fff;border-bottom:1px solid #dcdcdc;overflow:hidden"><div class="a" style="left:30.5px;top:0;width:1px;height:22px;background:#dcdcdc"></div></div>
<div class="a" style="left:758.5px;top:370.16px;width:26.5px;height:17.8px;background:rgb(255,89,89);border:1px solid #c8c8c8;border-radius:1.5px"></div>
<div class="t" style="left:791.4px;top:373.56px;font-size:10.6px;letter-spacing:-0.2px;color:#333">0.650</div>
<div class="a" style="left:756.5px;top:388.98px;width:342px;height:21.32px;background:#fff;border-bottom:1px solid #dcdcdc;overflow:hidden"><div class="a" style="left:30.5px;top:0;width:1px;height:22px;background:#dcdcdc"></div></div>
<div class="a" style="left:758.5px;top:391.48px;width:26.5px;height:17.8px;background:rgb(255,76,76);border:1px solid #c8c8c8;border-radius:1.5px"></div>
<div class="t" style="left:791.4px;top:394.88px;font-size:10.6px;letter-spacing:-0.2px;color:#333">0.700</div>
<div class="a" style="left:756.5px;top:410.30px;width:342px;height:21.32px;background:#fff;border-bottom:1px solid #dcdcdc;overflow:hidden"><div class="a" style="left:30.5px;top:0;width:1px;height:22px;background:#dcdcdc"></div></div>
<div class="a" style="left:758.5px;top:412.80px;width:26.5px;height:17.8px;background:rgb(255,64,64);border:1px solid #c8c8c8;border-radius:1.5px"></div>
<div class="t" style="left:791.4px;top:416.20px;font-size:10.6px;letter-spacing:-0.2px;color:#333">0.750</div>
<div class="a" style="left:756.5px;top:431.62px;width:342px;height:21.32px;background:#fff;border-bottom:1px solid #dcdcdc;overflow:hidden"><div class="a" style="left:30.5px;top:0;width:1px;height:22px;background:#dcdcdc"></div></div>
<div class="a" style="left:758.5px;top:434.12px;width:26.5px;height:17.8px;background:rgb(255,51,51);border:1px solid #c8c8c8;border-radius:1.5px"></div>
<div class="t" style="left:791.4px;top:437.52px;font-size:10.6px;letter-spacing:-0.2px;color:#333">0.800</div>
<div class="a" style="left:756.5px;top:452.94px;width:342px;height:21.32px;background:#fff;border-bottom:1px solid #dcdcdc;overflow:hidden"><div class="a" style="left:30.5px;top:0;width:1px;height:22px;background:#dcdcdc"></div></div>
<div class="a" style="left:758.5px;top:455.44px;width:26.5px;height:17.8px;background:rgb(255,38,38);border:1px solid #c8c8c8;border-radius:1.5px"></div>
<div class="t" style="left:791.4px;top:458.84px;font-size:10.6px;letter-spacing:-0.2px;color:#333">0.850</div>
<div class="a" style="left:756.5px;top:474.26px;width:342px;height:21.32px;background:#fff;border-bottom:1px solid #dcdcdc;overflow:hidden"><div class="a" style="left:30.5px;top:0;width:1px;height:22px;background:#dcdcdc"></div></div>
<div class="a" style="left:758.5px;top:476.76px;width:26.5px;height:17.8px;background:rgb(255,25,25);border:1px solid #c8c8c8;border-radius:1.5px"></div>
<div class="t" style="left:791.4px;top:480.16px;font-size:10.6px;letter-spacing:-0.2px;color:#333">0.900</div>
<div class="a" style="left:756.5px;top:495.58px;width:342px;height:21.32px;background:#fff;border-bottom:1px solid #dcdcdc;overflow:hidden"><div class="a" style="left:30.5px;top:0;width:1px;height:22px;background:#dcdcdc"></div></div>
<div class="a" style="left:758.5px;top:498.08px;width:26.5px;height:17.8px;background:rgb(255,13,13);border:1px solid #c8c8c8;border-radius:1.5px"></div>
<div class="t" style="left:791.4px;top:501.48px;font-size:10.6px;letter-spacing:-0.2px;color:#333">0.950</div>
<div class="a" style="left:756.5px;top:516.90px;width:342px;height:3.10px;background:#fff;border-bottom:1px solid #dcdcdc;overflow:hidden"><div class="a" style="left:30.5px;top:0;width:1px;height:22px;background:#dcdcdc"></div></div>
<div class="a" style="left:758.9px;top:518.2px;width:26px;height:1.8px;background:#2e8a2e"></div>
<div class="a" style="left:1098.5px;top:91px;width:13.5px;height:429px;background:#f0f0f0;border-left:1px solid #dcdcdc"></div>
<div class="a" style="left:1099.5px;top:92px;width:12.3px;height:13.2px;background:#fff;border:1px solid #c4c4c4"></div>
<svg class="a" style="left:1102.5px;top:96.5px" width="7" height="4"><path d="M0 4h7l-3.5-4z" fill="#6b6b6b"/></svg>
<div class="a" style="left:1099.5px;top:105.5px;width:12.3px;height:379px;background:#fff;border:1px solid #c4c4c4"></div>
<div class="a" style="left:1099.5px;top:504.3px;width:12.3px;height:14px;background:#fff;border:1px solid #c4c4c4"></div>
<svg class="a" style="left:1102.5px;top:509.5px" width="7" height="4"><path d="M0 0h7l-3.5 4z" fill="#6b6b6b"/></svg>
<div class="a" style="left:749.5px;top:523px;width:366.5px;height:1px;background:#dcdcdc"></div>
<div class="a" style="left:749.5px;top:530.3px;width:366.5px;height:23.7px;background:#dadada"></div>
<div class="a" style="left:749.8px;top:530px;width:90.8px;height:21.5px;background:#f0f0f0;border-left:1px solid #cfcfcf"></div>
<div class="a" style="left:840.5px;top:530.5px;width:75.5px;height:19.5px;background:#ececec;border:1px solid #d0d0d0"></div>
<div class="a" style="left:916px;top:530.5px;width:42.2px;height:19.5px;background:#ececec;border:1px solid #d0d0d0;border-left:none"></div>
<div class="t" style="left:758.7px;top:535.5px;font-size:9.5px;color:#333">Reserves Legend</div>
<div class="t" style="left:846.8px;top:535.5px;font-size:9.3px;color:#333">Dumps Legend</div>
<div class="t" style="left:923.8px;top:535.5px;font-size:9.5px;color:#333">Layers</div></body></html>
